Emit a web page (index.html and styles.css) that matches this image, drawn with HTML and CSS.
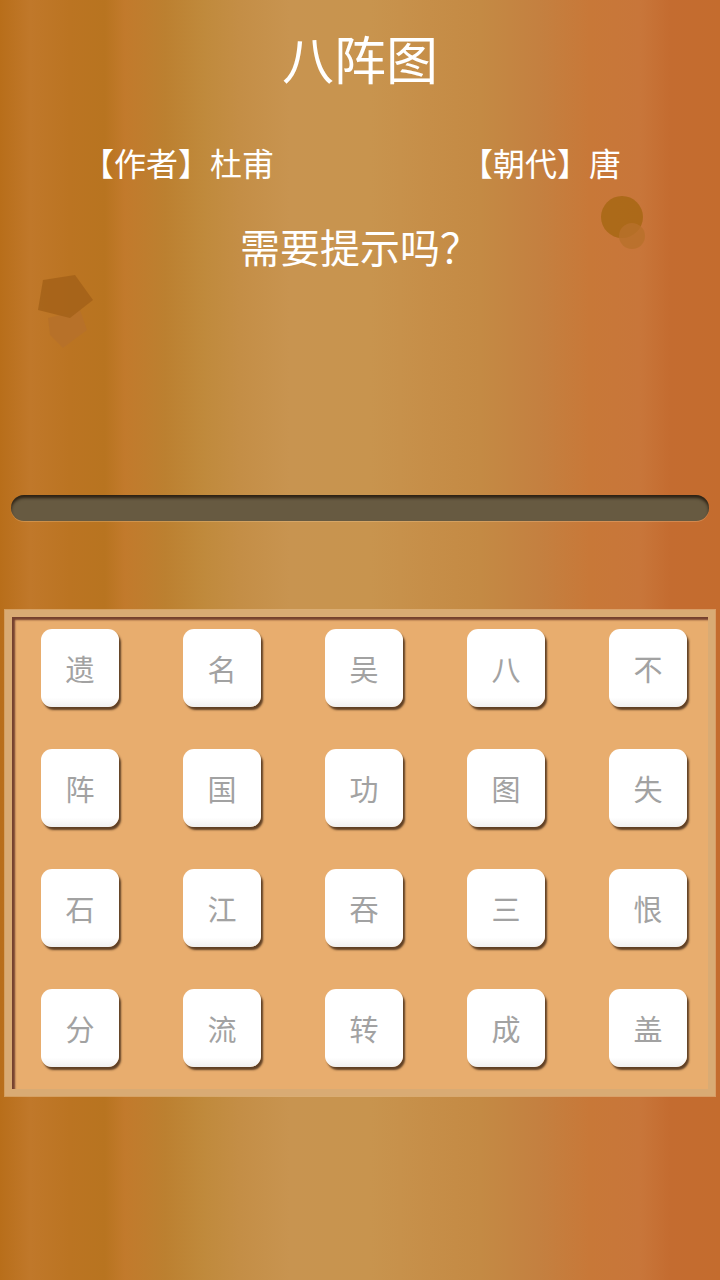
FILE: index.html
```html
<!DOCTYPE html>
<html lang="zh-CN">
<head>
<meta charset="utf-8">
<title>八阵图</title>
<link rel="stylesheet" href="styles.css">
</head>
<body>
<div class="page">
  <svg class="deco deco-pent" width="70" height="95" viewBox="0 0 70 95">
    <polygon points="16,58 48,50 55,70 31,88 18,75" fill="#b6712a" opacity="0.85"/>
    <polygon points="11,20 43,15 61,40 38,58 6,50" fill="#a5631a" opacity="0.9"/>
  </svg>
  <svg class="deco deco-dots" width="60" height="70" viewBox="0 0 60 70">
    <circle cx="21" cy="21" r="21" fill="#a86816" opacity="0.9"/>
    <circle cx="31" cy="40" r="13" fill="#b8702a" opacity="0.8"/>
  </svg>

  <h1 class="title">八阵图</h1>
  <div class="meta">
    <span class="meta-item">【作者】杜甫</span>
    <span class="meta-item">【朝代】唐</span>
  </div>
  <div class="hint">需要提示吗？</div>

  <div class="answer-bar"></div>

  <div class="board">
    <div class="board-inner">
      <div class="tile">遗</div>
      <div class="tile">名</div>
      <div class="tile">吴</div>
      <div class="tile">八</div>
      <div class="tile">不</div>
      <div class="tile">阵</div>
      <div class="tile">国</div>
      <div class="tile">功</div>
      <div class="tile">图</div>
      <div class="tile">失</div>
      <div class="tile">石</div>
      <div class="tile">江</div>
      <div class="tile">吞</div>
      <div class="tile">三</div>
      <div class="tile">恨</div>
      <div class="tile">分</div>
      <div class="tile">流</div>
      <div class="tile">转</div>
      <div class="tile">成</div>
      <div class="tile">盖</div>
    </div>
  </div>
</div>
</body>
</html>
```

FILE: styles.css
```css
* { box-sizing: border-box; }
html, body {
  margin: 0;
  padding: 0;
}
body {
  width: 720px;
  height: 1280px;
  overflow: hidden;
  font-family: "Noto Sans CJK SC", "Noto Sans", sans-serif;
  background: linear-gradient(to right,
    #b86e1a 0px,
    #c0782a 30px,
    #bb7422 70px,
    #b87420 105px,
    #c27a2c 125px,
    #bc8030 165px,
    #c08a3c 205px,
    #c48e46 240px,
    #c89450 290px,
    #c8944e 370px,
    #c68e48 430px,
    #c48a44 480px,
    #c48040 540px,
    #c87838 590px,
    #c8763a 640px,
    #c46c30 670px,
    #c46c2e 720px);
}
.page {
  position: relative;
  width: 720px;
  height: 1280px;
  padding-top: 20px;
}
.deco {
  position: absolute;
}
.deco-pent {
  left: 32px;
  top: 260px;
}
.deco-dots {
  left: 601px;
  top: 196px;
}
.title {
  margin: 0;
  height: 76px;
  line-height: 76px;
  font-size: 52px;
  font-weight: 400;
  color: #ffffff;
  text-align: center;
}
.meta {
  margin-top: 46px;
  height: 40px;
  line-height: 40px;
  display: flex;
  justify-content: space-between;
  padding: 0 99px 0 82px;
  font-size: 32px;
  color: #ffffff;
}
.hint {
  margin-top: 40px;
  height: 48px;
  line-height: 48px;
  text-align: center;
  font-size: 40px;
  color: #ffffff;
}
.answer-bar {
  margin: 225px 11px 0 11px;
  height: 26px;
  border-radius: 13px;
  background: #675a41;
  box-shadow: inset 0 3px 3px rgba(25, 15, 5, 0.75), 0 1px 0 rgba(255, 220, 170, 0.25);
}
.board {
  margin: 89px 5px 0 5px;
  height: 486px;
  border: 7px solid #d9ab74;
  box-shadow: 0 0 0 1px rgba(230, 190, 140, 0.6);
  background: #e8ad6e;
}
.board-inner {
  height: 100%;
  display: grid;
  grid-template-columns: repeat(5, 78px);
  grid-auto-rows: 78px;
  column-gap: 64px;
  row-gap: 42px;
  padding: 12px 0 0 29px;
  box-shadow: inset 3px 3px 2px rgba(95, 45, 35, 0.85);
}
.tile {
  width: 78px;
  height: 78px;
  border-radius: 11px;
  background: linear-gradient(to bottom, #ffffff 0%, #ffffff 88%, #f0f0f0 100%);
  box-shadow: 2px 3px 2px rgba(70, 45, 25, 0.85);
  display: flex;
  align-items: center;
  justify-content: center;
  font-size: 29px;
  color: #a2a2a2;
}
```
